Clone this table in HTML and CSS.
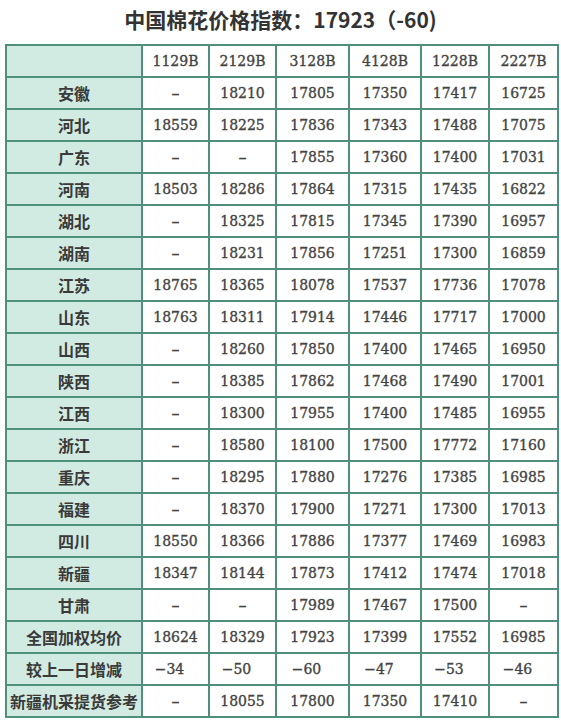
FILE: index.html
```html
<!DOCTYPE html>
<html lang="zh">
<head>
<meta charset="utf-8">
<title>中国棉花价格指数</title>
<link rel="stylesheet" href="styles.css">
</head>
<body>
<h1 class="title">中国棉花价格指数：17923（-60)</h1>
<table class="price-table">
<colgroup>
<col class="c-name"><col class="c1"><col class="c2"><col class="c3"><col class="c4"><col class="c5"><col class="c6">
</colgroup>
<tbody>
<tr><th></th><td>1129B</td><td>2129B</td><td>3128B</td><td>4128B</td><td>1228B</td><td>2227B</td></tr>
<tr><th>安徽</th><td><span class="dash">–</span></td><td>18210</td><td>17805</td><td>17350</td><td>17417</td><td>16725</td></tr>
<tr><th>河北</th><td>18559</td><td>18225</td><td>17836</td><td>17343</td><td>17488</td><td>17075</td></tr>
<tr><th>广东</th><td><span class="dash">–</span></td><td><span class="dash">–</span></td><td>17855</td><td>17360</td><td>17400</td><td>17031</td></tr>
<tr><th>河南</th><td>18503</td><td>18286</td><td>17864</td><td>17315</td><td>17435</td><td>16822</td></tr>
<tr><th>湖北</th><td><span class="dash">–</span></td><td>18325</td><td>17815</td><td>17345</td><td>17390</td><td>16957</td></tr>
<tr><th>湖南</th><td><span class="dash">–</span></td><td>18231</td><td>17856</td><td>17251</td><td>17300</td><td>16859</td></tr>
<tr><th>江苏</th><td>18765</td><td>18365</td><td>18078</td><td>17537</td><td>17736</td><td>17078</td></tr>
<tr><th>山东</th><td>18763</td><td>18311</td><td>17914</td><td>17446</td><td>17717</td><td>17000</td></tr>
<tr><th>山西</th><td><span class="dash">–</span></td><td>18260</td><td>17850</td><td>17400</td><td>17465</td><td>16950</td></tr>
<tr><th>陕西</th><td><span class="dash">–</span></td><td>18385</td><td>17862</td><td>17468</td><td>17490</td><td>17001</td></tr>
<tr><th>江西</th><td><span class="dash">–</span></td><td>18300</td><td>17955</td><td>17400</td><td>17485</td><td>16955</td></tr>
<tr><th>浙江</th><td><span class="dash">–</span></td><td>18580</td><td>18100</td><td>17500</td><td>17772</td><td>17160</td></tr>
<tr><th>重庆</th><td><span class="dash">–</span></td><td>18295</td><td>17880</td><td>17276</td><td>17385</td><td>16985</td></tr>
<tr><th>福建</th><td><span class="dash">–</span></td><td>18370</td><td>17900</td><td>17271</td><td>17300</td><td>17013</td></tr>
<tr><th>四川</th><td>18550</td><td>18366</td><td>17886</td><td>17377</td><td>17469</td><td>16983</td></tr>
<tr><th>新疆</th><td>18347</td><td>18144</td><td>17873</td><td>17412</td><td>17474</td><td>17018</td></tr>
<tr><th>甘肃</th><td><span class="dash">–</span></td><td><span class="dash">–</span></td><td>17989</td><td>17467</td><td>17500</td><td><span class="dash">–</span></td></tr>
<tr><th>全国加权均价</th><td>18624</td><td>18329</td><td>17923</td><td>17399</td><td>17552</td><td>16985</td></tr>
<tr class="change"><th>较上一日增减</th><td>−34</td><td>−50</td><td>−60</td><td>−47</td><td>−53</td><td>−46</td></tr>
<tr><th>新疆机采提货参考</th><td><span class="dash">–</span></td><td>18055</td><td>17800</td><td>17350</td><td>17410</td><td><span class="dash">–</span></td></tr>
</tbody>
</table>
</body>
</html>
```
FILE: styles.css
```css
html, body {
  margin: 0;
  padding: 0;
  background: #ffffff;
}
body {
  font-family: "Noto Sans CJK SC", "Noto Sans", sans-serif;
  color: #333333;
}
.title {
  margin: 0;
  height: 44px;
  line-height: 38px;
  font-size: 21px;
  font-weight: 700;
  text-align: center;
  color: #333333;
}
.price-table {
  margin-left: 5px;
  width: 552px;
  table-layout: fixed;
  border-collapse: collapse;
  border: 2px solid #4f8f7c;
}
.c-name { width: 136px; }
.c1 { width: 67px; }
.c2 { width: 67px; }
.c3 { width: 73px; }
.c4 { width: 72px; }
.c5 { width: 68px; }
.c6 { width: 69px; }
.price-table th,
.price-table td {
  border: 2px solid #4f8f7c;
  height: 30px;
  padding: 0;
  text-align: center;
  vertical-align: middle;
}
.price-table tr {
  height: 32px;
}
.price-table th {
  background: #d2ebe2;
  font-family: "Noto Sans CJK SC", sans-serif;
  font-size: 16px;
  font-weight: 700;
  color: #3a3a3a;
}
.price-table td {
  font-family: "DejaVu Serif", "Liberation Serif", serif;
  font-size: 14px;
  font-weight: 400;
  color: #444444;
  -webkit-text-stroke: 0.35px #444444;
}
.dash {
  font-size: 16px;
}
.change td {
  padding-right: 12px;
}
```
